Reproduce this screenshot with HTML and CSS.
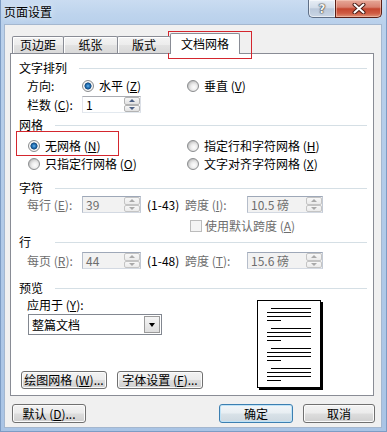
FILE: index.html
```html
<!DOCTYPE html>
<html lang="zh-CN">
<head>
<meta charset="utf-8">
<title>页面设置</title>
<link rel="stylesheet" href="styles.css">
</head>
<body>
<div class="window">
  <div class="titlebar">
    <div class="title">页面设置</div>
    <div class="caps">
      <div class="cap help"><span>?</span></div>
      <div class="cap close">
        <svg width="14" height="11" viewBox="0 0 14 11"><path d="M2.5 1.5 L11.5 9.5 M11.5 1.5 L2.5 9.5" stroke="#4a1d16" stroke-width="4" stroke-linecap="round"/><path d="M2.5 1.5 L11.5 9.5 M11.5 1.5 L2.5 9.5" stroke="#ffffff" stroke-width="2" stroke-linecap="round"/></svg>
      </div>
    </div>
  </div>
  <div class="client">
    <div class="tabs">
      <div class="tab t1">页边距</div>
      <div class="tab t2">纸张</div>
      <div class="tab t3">版式</div>
      <div class="tab t4 active">文档网格</div>
    </div>
    <div class="panel">
      <div class="sec s-text"><span>文字排列</span></div>
      <div class="row r-dir">
        <span class="lbl">方向:</span>
        <span class="opt w105"><i class="radio on"></i>水平 (<u>Z</u>)</span>
        <span class="opt"><i class="radio"></i>垂直 (<u>V</u>)</span>
      </div>
      <div class="row tall r-cols">
        <span class="lbl">栏数 (<u>C</u>):</span>
        <div class="spin"><span class="val">1</span><div class="btns"><div class="sb up"><i></i></div><div class="sb dn"><i></i></div></div></div>
      </div>
      <div class="sec s-grid"><span>网格</span></div>
      <div class="row r-none">
        <span class="opt w159"><i class="radio on"></i>无网格 (<u>N</u>)</span>
        <span class="opt"><i class="radio"></i>指定行和字符网格 (<u>H</u>)</span>
      </div>
      <div class="row r-line">
        <span class="opt w159"><i class="radio"></i>只指定行网格 (<u>O</u>)</span>
        <span class="opt"><i class="radio"></i>文字对齐字符网格 (<u>X</u>)</span>
      </div>
      <div class="sec s-chars"><span>字符</span></div>
      <div class="row tall r-perline">
        <span class="lbl dis">每行 (<u>E</u>):</span>
        <div class="spin dis"><span class="val">39</span><div class="btns"><div class="sb up"><i></i></div><div class="sb dn"><i></i></div></div></div>
        <span class="range">(1-43)</span>
        <span class="lbl2 dis">跨度 (<u>I</u>):</span>
        <div class="spin wide dis"><span class="val">10.5 磅</span><div class="btns"><div class="sb up"><i></i></div><div class="sb dn"><i></i></div></div></div>
      </div>
      <div class="row r-check">
        <i class="check"></i><span class="dis">使用默认跨度 (<u>A</u>)</span>
      </div>
      <div class="sec s-lines"><span>行</span></div>
      <div class="row tall r-perpage">
        <span class="lbl dis">每页 (<u>R</u>):</span>
        <div class="spin dis"><span class="val">44</span><div class="btns"><div class="sb up"><i></i></div><div class="sb dn"><i></i></div></div></div>
        <span class="range">(1-48)</span>
        <span class="lbl2 dis">跨度 (<u>T</u>):</span>
        <div class="spin wide dis"><span class="val">15.6 磅</span><div class="btns"><div class="sb up"><i></i></div><div class="sb dn"><i></i></div></div></div>
      </div>
      <div class="sec s-preview"><span>预览</span></div>
      <div class="pv-area">
        <div class="pv-left">
          <div class="apply">应用于 (<u>Y</u>):</div>
          <div class="select"><span class="sel-val">整篇文档</span><div class="dd"><i></i></div></div>
          <div class="pv-btns">
            <div class="btn b-draw">绘图网格 (<u>W</u>)...</div>
            <div class="btn b-font">字体设置 (<u>F</u>)...</div>
          </div>
        </div>
        <div class="page">
          <div class="grp"><i class="ind"></i><i></i><i></i><i class="sh"></i></div>
          <div class="grp"><i class="ind"></i><i></i><i></i><i class="sh"></i></div>
          <div class="grp"><i class="ind"></i><i></i><i></i><i class="sh"></i></div>
          <div class="grp"><i class="ind"></i><i></i><i></i><i class="sh"></i></div>
        </div>
      </div>
    </div>
    <div class="footer">
      <div class="btn b-default">默认 (<u>D</u>)...</div>
      <div class="btn b-ok">确定</div>
      <div class="btn b-cancel">取消</div>
    </div>
  </div>
  <div class="mark mark-tab"></div>
  <div class="mark mark-none"></div>
</div>
</body>
</html>
```
FILE: styles.css
```css
* { box-sizing: border-box; }
html, body { margin: 0; padding: 0; }
body {
  width: 387px;
  height: 432px;
  overflow: hidden;
  font-family: "Noto Sans CJK SC", "Liberation Sans", sans-serif;
  font-size: 12px;
  color: #000;
  background: #b7cfea;
}
u { text-decoration: underline; text-underline-offset: 1px; }

.window {
  position: relative;
  width: 387px;
  height: 432px;
  display: flex;
  flex-direction: column;
  background: linear-gradient(180deg, #cadcf1 0px, #bed4ed 14px, #b9d0eb 24px, #a9c4e5 100%);
  box-shadow: inset 1px 0 0 #7d9cc4, inset -1px 0 0 #7d9cc4, inset 0 -1px 0 #7d9cc4;
}

/* title bar */
.titlebar { height: 24px; display: flex; align-items: flex-start; flex: none; }
.title {
  padding-left: 4px;
  line-height: 24px;
  font-size: 12px;
  color: #000;
  text-shadow: 0 0 6px rgba(255,255,255,0.9);
}
.caps { margin-left: auto; margin-right: 5px; display: flex; }
.cap { height: 18px; display: flex; align-items: center; justify-content: center; }
.help {
  width: 27px;
  border: 1px solid #5f6f86;
  border-top: none;
  border-right: none;
  border-radius: 0 0 0 5px;
  background: linear-gradient(180deg, #e8eef6 0%, #d3dde9 45%, #bac8da 52%, #cad6e5 100%);
  box-shadow: inset 0 0 0 1px rgba(255,255,255,0.55);
}
.help span {
  font-family: "DejaVu Sans", sans-serif;
  font-weight: bold;
  font-size: 12px;
  line-height: 12px;
  color: #f4f4f4;
  text-shadow: 0 0 1px #333, 0 0 1px #333, 0 0 2px #555;
}
.close {
  width: 47px;
  border: 1px solid #5a1f17;
  border-top: none;
  border-radius: 0 0 5px 0;
  background: linear-gradient(180deg, #e6a899 0%, #d98170 42%, #c4462f 52%, #cf5b43 78%, #de9378 100%);
  box-shadow: inset 0 0 0 1px rgba(255,220,205,0.45);
}

/* client */
.client {
  flex: none;
  margin: 0 5px 0 4px;
  width: 378px;
  height: 404px;
  background: #f0f0f0;
  border: 1px solid #a4b7cf;
  padding: 8px 7px 0 5px;
  display: flex;
  flex-direction: column;
}

/* tabs */
.tabs {
  display: flex;
  align-items: flex-end;
  height: 20px;
  padding-left: 2px;
  position: relative;
  z-index: 1;
  flex: none;
}
.tab {
  height: 17px;
  border: 1px solid #898c95;
  border-bottom: none;
  border-radius: 2px 2px 0 0;
  margin-left: -1px;
  background: linear-gradient(180deg, #f4f4f4 0%, #ececec 50%, #e2e2e2 52%, #d9d9d9 100%);
  box-shadow: inset 1px 1px 0 #ffffff;
  display: flex;
  align-items: center;
  justify-content: center;
  line-height: 16px;
  white-space: nowrap;
}
.t1 { width: 52px; margin-left: 0; }
.t2 { width: 55px; }
.t3 { width: 54px; }
.t4 {
  width: 70px;
  height: 21px;
  margin-bottom: -1px;
  background: #fff;
  box-shadow: none;
  padding-bottom: 1px;
}

/* panel */
.panel {
  flex: none;
  width: 364px;
  height: 343px;
  border: 1px solid #898c95;
  background: #fff;
  padding: 6px 6px 0 8px;
  display: flex;
  flex-direction: column;
}
.sec { display: flex; align-items: center; height: 16px; line-height: 16px; flex: none; }
.sec > span { min-width: 24px; }
.sec::after { content: ""; flex: 1; height: 1px; background: #d5dfe5; margin-left: 12px; }

.row { display: flex; align-items: center; height: 16px; line-height: 16px; white-space: nowrap; flex: none; }
.row.tall { height: 17px; }

.s-grid { margin-top: 4px; }
.s-chars { margin-top: 8px; }
.s-preview { margin-top: 11px; }
.r-dir { margin-top: 2px; }
.r-cols { margin-top: 2px; }
.r-none { margin-top: 5px; }
.r-line { margin-top: 2px; }
.r-check { margin-top: 5px; }
.r-perpage { margin-top: 2px; }

.lbl { width: 55px; margin-left: 8px; flex: none; }
.lbl2 { width: 62px; flex: none; }
.range { width: 38px; margin-left: 6px; flex: none; }
.dis { color: #6d6d6d; }

.opt { display: flex; align-items: center; flex: none; }
.w105 { width: 105px; }
.w159 { width: 159px; }
.r-none .w159, .r-line .w159 { margin-left: 9px; }

.radio {
  display: block;
  width: 12px;
  height: 12px;
  margin-right: 5px;
  flex: none;
  border-radius: 50%;
  border: 1px solid #8b8d8f;
  background: radial-gradient(circle at 60% 62%, #fdfdfd 0px, #ededed 3px, #d6d6d6 5px, #c2c2c2 6px);
}
.radio.on {
  background: radial-gradient(circle at 50% 50%, #6fb5ea 0px, #2b7cc0 1.5px, #11487f 3.2px, #e9e9e9 3.8px, #fafafa 4.5px, #cfcfcf 6px);
}

.check {
  display: block;
  width: 12px;
  height: 12px;
  margin-left: 171px;
  margin-right: 3px;
  border: 1px solid #bcbcbc;
  background: #f4f4f4;
  flex: none;
}

/* spin boxes */
.spin {
  width: 59px;
  height: 17px;
  flex: none;
  display: flex;
  align-items: stretch;
  border: 1px solid;
  border-color: #abadb3 #dbdfe6 #e3e9ef #e2e3ea;
  background: #fff;
  padding-left: 3px;
}
.spin.wide { width: 76px; }
.spin .val { flex: 1; line-height: 15px; }
.spin .btns { width: 16px; display: flex; flex-direction: column; }
.sb {
  flex: 1;
  border: 1px solid #b3b3b3;
  border-radius: 2px;
  background: linear-gradient(180deg, #f7f7f7, #e1e1e1);
  display: flex;
  align-items: center;
  justify-content: center;
}
.sb i { display: block; width: 0; height: 0; border-left: 3px solid transparent; border-right: 3px solid transparent; }
.sb.up i { border-bottom: 3px solid #4d6185; }
.sb.dn i { border-top: 3px solid #4d6185; }
.spin.dis {
  background: #f2f2f2;
  border-color: #9ea8b8 #c3cad5 #d3d9e2 #b5bdca;
  color: #6d6d6d;
}
.spin.dis .sb { border-color: #c4c4c4; background: linear-gradient(180deg, #f7f7f7, #ebebeb); }
.spin.dis .sb.up i { border-bottom-color: #a9a9a9; }
.spin.dis .sb.dn i { border-top-color: #a9a9a9; }

/* preview area */
.pv-area { display: flex; flex: none; }
.pv-left { width: 238px; flex: none; display: flex; flex-direction: column; }
.apply { margin: 1px 0 0 8px; height: 16px; line-height: 16px; }
.select {
  margin: 1px 0 0 9px;
  width: 134px;
  height: 21px;
  border: 1px solid #828790;
  background: #fff;
  display: flex;
  align-items: stretch;
  padding: 1px;
}
.sel-val { flex: 1; padding-left: 2px; line-height: 17px; }
.dd {
  width: 16px;
  border: 1px solid #9a9a9a;
  background: linear-gradient(180deg, #f5f5f5, #dedede);
  display: flex;
  align-items: center;
  justify-content: center;
}
.dd i { display: block; width: 0; height: 0; border-left: 3.5px solid transparent; border-right: 3.5px solid transparent; border-top: 4px solid #000; }
.pv-btns { display: flex; margin: 36px 0 0 2px; }

.btn {
  height: 19px;
  border: 1px solid #707070;
  border-radius: 3px;
  background: linear-gradient(180deg, #f3f3f3 0%, #ebebeb 48%, #dddddd 52%, #cfcfcf 100%);
  box-shadow: inset 0 0 0 1px #fbfbfb;
  display: flex;
  align-items: center;
  justify-content: center;
  line-height: 16px;
  white-space: nowrap;
  flex: none;
}
.b-draw { width: 86px; height: 18px; }
.b-font { width: 86px; height: 18px; margin-left: 10px; }

.page {
  margin-top: 4px;
  width: 64px;
  height: 88px;
  border: 1px solid #000;
  background: #fff;
  box-shadow: 2px 2px 0 #000;
  padding: 7px 0 0 9px;
  display: flex;
  flex-direction: column;
  gap: 7px;
  flex: none;
}
.grp { display: flex; flex-direction: column; gap: 3px; }
.grp i { display: block; height: 1px; width: 44px; background: #000; }
.grp i.ind { margin-left: 4px; width: 40px; }
.grp i.sh { width: 14px; }

/* footer */
.footer { display: flex; margin-top: 8px; flex: none; }
.b-default { width: 74px; margin-left: 2px; }
.b-ok {
  width: 74px;
  margin-left: 133px;
  border-color: #3c7fb1;
  box-shadow: inset 0 0 0 1px #bfe3f7;
  background: linear-gradient(180deg, #f2f6f9 0%, #e8eef2 48%, #d9e2e8 52%, #cdd8e0 100%);
}
.b-cancel { width: 72px; margin-left: 10px; }

/* red annotation boxes */
.mark { position: absolute; border: 1px solid #d4262e; pointer-events: none; }
.mark-tab { left: 168px; top: 31px; width: 84px; height: 28px; }
.mark-none { left: 16px; top: 131px; width: 103px; height: 25px; }
```
